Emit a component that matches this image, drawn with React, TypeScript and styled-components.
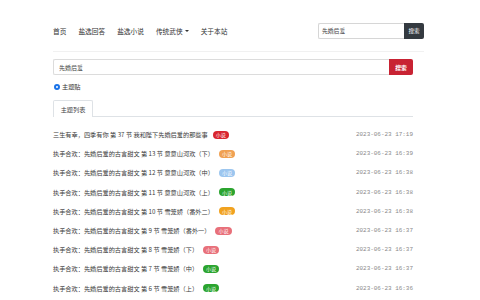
import React from "react";
import styled, { createGlobalStyle } from "styled-components";

const GlobalStyle = createGlobalStyle`
  body {
    margin: 0;
    background: #fff;
    font-family: "Noto Sans CJK SC", "Noto Sans", sans-serif;
    color: #212529;
    text-spacing-trim: space-all;
  }
`;

const BADGE = {
  red: "#d8262f",
  orange: "#f0a152",
  sky: "#9cc6ef",
  green: "#2ba42f",
  amber: "#f1a21f",
  pink: "#e8707a",
};

type Tone = keyof typeof BADGE;

const topics: { title: string; tone: Tone; time: string }[] = [
  { title: "三生有幸，四季有你 第 37 节 我和陛下先婚后爱的那些事", tone: "red", time: "2023-06-23 17:19" },
  { title: "执手合欢：先婚后爱的古言甜文 第 13 节 意意山河欢（下）", tone: "orange", time: "2023-06-23 16:39" },
  { title: "执手合欢：先婚后爱的古言甜文 第 12 节 意意山河欢（中）", tone: "sky", time: "2023-06-23 16:38" },
  { title: "执手合欢：先婚后爱的古言甜文 第 11 节 意意山河欢（上）", tone: "green", time: "2023-06-23 16:38" },
  { title: "执手合欢：先婚后爱的古言甜文 第 10 节 雪笼娇（番外二）", tone: "amber", time: "2023-06-23 16:38" },
  { title: "执手合欢：先婚后爱的古言甜文 第 9 节 雪笼娇（番外一）", tone: "pink", time: "2023-06-23 16:37" },
  { title: "执手合欢：先婚后爱的古言甜文 第 8 节 雪笼娇（下）", tone: "pink", time: "2023-06-23 16:37" },
  { title: "执手合欢：先婚后爱的古言甜文 第 7 节 雪笼娇（中）", tone: "green", time: "2023-06-23 16:37" },
  { title: "执手合欢：先婚后爱的古言甜文 第 6 节 雪笼娇（上）", tone: "green", time: "2023-06-23 16:36" },
];

const App = () => {
  return (
    <>
      <GlobalStyle />
      <Page>
        <NavBar>
          <NavLinks>
            <NavLink>首页</NavLink>
            <NavLink>盐选回答</NavLink>
            <NavLink>盐选小说</NavLink>
            <NavLink>
              传统武侠<Caret />
            </NavLink>
            <NavLink>关于本站</NavLink>
          </NavLinks>
          <NavSearch>
            <NavInput>先婚后爱</NavInput>
            <NavButton>搜索</NavButton>
          </NavSearch>
        </NavBar>

        <Main>
          <SearchRow>
            <SearchInput>先婚后爱</SearchInput>
            <SearchButton>搜索</SearchButton>
          </SearchRow>

          <RadioRow>
            <Radio />
            <span>主题贴</span>
          </RadioRow>

          <Tabs>
            <Tab>主题列表</Tab>
          </Tabs>

          <TopicList>
            {topics.map((t, i) => (
              <TopicRow key={i}>
                <TopicTitle>
                  {t.title}
                  <Badge tone={t.tone}>小说</Badge>
                </TopicTitle>
                <TopicTime>{t.time}</TopicTime>
              </TopicRow>
            ))}
          </TopicList>
        </Main>
      </Page>
    </>
  );
};

export default App;

const Page = styled.div`
  width: 480px;
  height: 300px;
  overflow: hidden;
  background: #fff;
`;

const NavBar = styled.div`
  height: 52px;
  margin: 0 56px 0 53px;
  display: flex;
  align-items: center;
  justify-content: space-between;
  border-bottom: 1px solid #f1f1f1;
  box-sizing: border-box;
  padding-top: 16px;
  padding-bottom: 6px;
`;

const NavLinks = styled.div`
  display: flex;
  align-items: center;
  gap: 12px;
`;

const NavLink = styled.span`
  font-size: 6.7px;
  color: #333;
  display: flex;
  align-items: center;
`;

const Caret = styled.span`
  display: inline-block;
  margin-left: 2px;
  width: 0;
  height: 0;
  border-left: 2px solid transparent;
  border-right: 2px solid transparent;
  border-top: 2.5px solid #333;
`;

const NavSearch = styled.div`
  display: flex;
  height: 16px;
`;

const NavInput = styled.div`
  width: 86px;
  box-sizing: border-box;
  border: 1px solid #d6d6d6;
  border-right: none;
  border-radius: 2px 0 0 2px;
  font-size: 5.8px;
  color: #444;
  padding-left: 3px;
  display: flex;
  align-items: center;
`;

const NavButton = styled.div`
  width: 20px;
  background: #343a40;
  color: #fff;
  font-size: 5.6px;
  border-radius: 0 2px 2px 0;
  display: flex;
  align-items: center;
  justify-content: center;
`;

const Main = styled.div`
  width: 360px;
  margin-left: 53px;
  padding-top: 7px;
`;

const SearchRow = styled.div`
  display: flex;
  height: 16px;
`;

const SearchInput = styled.div`
  flex: 1;
  box-sizing: border-box;
  border: 1px solid #dcdcdc;
  border-right: none;
  border-radius: 2px 0 0 2px;
  font-size: 6px;
  color: #444;
  padding-left: 5px;
  display: flex;
  align-items: center;
`;

const SearchButton = styled.div`
  width: 24px;
  background: #c82333;
  color: #fff;
  font-size: 5.8px;
  font-weight: bold;
  border-radius: 0 2px 2px 0;
  display: flex;
  align-items: center;
  justify-content: center;
`;

const RadioRow = styled.div`
  margin-top: 7px;
  height: 9px;
  display: flex;
  align-items: center;
  gap: 2px;
  font-size: 6.2px;
  color: #333;
  padding-left: 1px;
`;

const Radio = styled.span`
  width: 6px;
  height: 6px;
  border-radius: 50%;
  box-sizing: border-box;
  background: #fff;
  border: 2px solid #1a73e8;
`;

const Tabs = styled.div`
  margin-top: 9px;
  display: flex;
  border-bottom: 1px solid #dee2e6;
`;

const Tab = styled.div`
  width: 40px;
  height: 17px;
  box-sizing: border-box;
  border: 1px solid #dee2e6;
  border-bottom: none;
  border-radius: 2px 2px 0 0;
  margin-bottom: -1px;
  background: #fff;
  font-size: 6.2px;
  color: #444;
  display: flex;
  align-items: center;
  justify-content: center;
`;

const TopicList = styled.div`
  padding-top: 8px;
`;

const TopicRow = styled.div`
  height: 19.2px;
  display: flex;
  align-items: center;
  justify-content: space-between;
`;

const TopicTitle = styled.div`
  font-size: 6.2px;
  color: #3a3a3a;
  display: flex;
  align-items: center;
  white-space: pre;
`;

const Badge = styled.span<{ tone: Tone }>`
  margin-left: 5px;
  height: 8px;
  padding: 0 3px;
  border-radius: 4px;
  background: ${({ tone }) => BADGE[tone]};
  color: #fff;
  font-size: 5px;
  display: inline-flex;
  align-items: center;
`;

const TopicTime = styled.div`
  font-family: "Liberation Mono", "DejaVu Sans Mono", monospace;
  font-size: 5.95px;
  color: #8a8a8a;
`;
